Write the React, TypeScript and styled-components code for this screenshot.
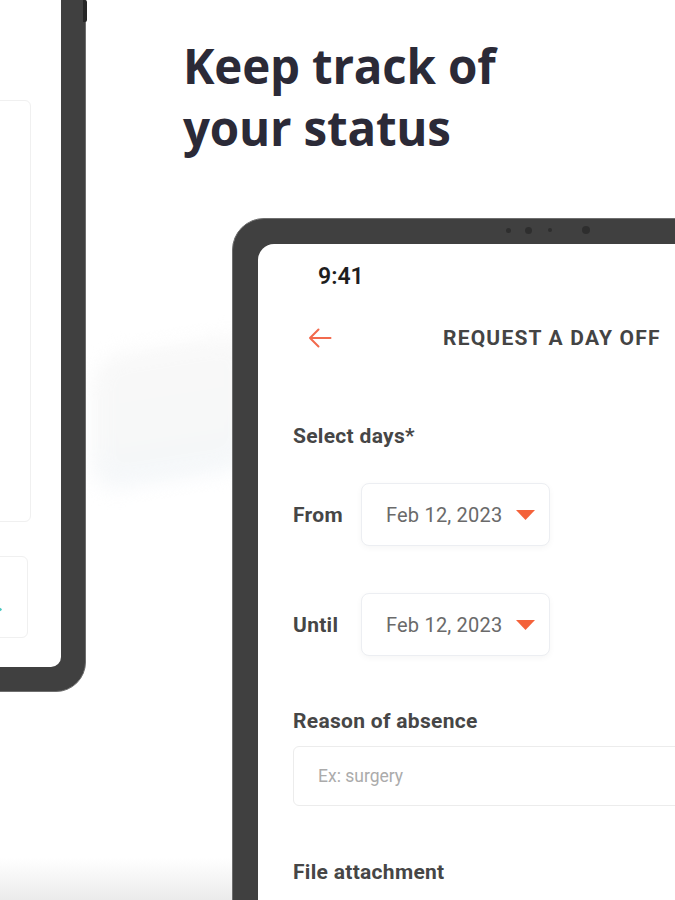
import React from "react";
import styled, { createGlobalStyle } from "styled-components";

const GlobalStyle = createGlobalStyle`
  html, body { margin: 0; padding: 0; background: #ffffff; }
  body {
    width: 675px;
    height: 900px;
    overflow: hidden;
    font-family: Roboto, "Noto Sans", Arial, sans-serif;
  }
  * { box-sizing: border-box; }
`;

const Page = styled.main`
  position: relative;
  width: 675px;
  height: 900px;
  overflow: hidden;
  display: grid;
  grid-template-columns: 86px 1fr;
  align-items: start;
  background: linear-gradient(to bottom, #ffffff 0, #ffffff 858px, #ebebeb 900px);
`;

const Haze = styled.div`
  position: absolute;
  left: 92px;
  top: 345px;
  width: 160px;
  height: 135px;
  border-radius: 30px;
  background: linear-gradient(to bottom, #f4f4f4 0%, #f3f4f4 55%, #edf2f6 100%);
  filter: blur(10px);
  transform: skewY(-9deg);
  opacity: 0.6;
  z-index: 0;
`;

const Device = styled.div<{ $radius: number; $pad: number }>`
  position: relative;
  z-index: 1;
  display: flex;
  padding: ${(p) => p.$pad}px;
  background: #404040;
  border: 1px solid #6e6e6e;
  border-radius: ${(p) => p.$radius}px;
`;

const LeftDevice = styled(Device)`
  width: 400px;
  height: 992px;
  margin-top: -300px;
  margin-left: -314px;
`;

const SideButton = styled.span`
  position: absolute;
  right: -2px;
  top: 299px;
  width: 4px;
  height: 22px;
  border-radius: 0 2px 2px 0;
  background: #262626;
`;

const LeftScreen = styled.div`
  flex: 1;
  background: #ffffff;
  border-radius: 10px;
  display: flex;
  flex-direction: column;
  align-items: flex-end;
  justify-content: flex-end;
  gap: 34px;
  padding: 0 30px 29px 0;
`;

const GhostCard = styled.div<{ $h: number; $shift?: number }>`
  width: 300px;
  height: ${(p) => p.$h}px;
  margin-right: ${(p) => p.$shift ?? 0}px;
  border: 1px solid #f0f0f0;
  border-radius: 6px;
  background: #ffffff;
  display: flex;
  align-items: flex-end;
  justify-content: flex-end;
  padding: 0 24px 23px 0;
`;

const RightColumn = styled.section`
  display: flex;
  flex-direction: column;
  min-width: 0;
`;

const Heading = styled.h1`
  margin: 35px 0 0 97px;
  font-family: "Open Sans", "Noto Sans", sans-serif;
  font-weight: 700;
  font-size: 47.5px;
  line-height: 62px;
  letter-spacing: -0.2px;
  color: #2b2a37;
`;

const RightDevice = styled(Device)`
  width: 560px;
  height: 760px;
  margin: 59px 0 0 146px;
`;

const Sensors = styled.div`
  position: absolute;
  top: 7px;
  left: 273px;
  height: 8px;
  display: flex;
  align-items: center;
`;

const Dot = styled.span<{ $size: number; $gap: number }>`
  width: ${(p) => p.$size}px;
  height: ${(p) => p.$size}px;
  margin-right: ${(p) => p.$gap}px;
  border-radius: 50%;
  background: #2e2e2e;
`;

const Screen = styled.div`
  flex: 1;
  background: #ffffff;
  border-radius: 16px;
  display: flex;
  flex-direction: column;
  padding-left: 35px;
  min-width: 0;
`;

const StatusTime = styled.div`
  margin: 20px 0 0 25px;
  font-weight: 600;
  font-size: 23px;
  line-height: 26px;
  color: #1e1e1e;
`;

const Header = styled.div`
  display: flex;
  align-items: center;
  height: 30px;
  margin-top: 33px;
`;

const BackButton = styled.span`
  display: inline-flex;
  margin-left: 15px;
`;

const Title = styled.div`
  margin-left: 111px;
  font-weight: 700;
  font-size: 21px;
  line-height: 24px;
  letter-spacing: 1.2px;
  color: #444444;
  white-space: nowrap;
`;

const Label = styled.div<{ $top: number }>`
  margin-top: ${(p) => p.$top}px;
  font-weight: 700;
  font-size: 21px;
  line-height: 24px;
  letter-spacing: 0.3px;
  color: #464646;
  white-space: nowrap;
`;

const DateRow = styled.div<{ $top: number }>`
  display: grid;
  grid-template-columns: 68px 189px;
  align-items: center;
  margin-top: ${(p) => p.$top}px;
`;

const RowLabel = styled.span`
  font-weight: 700;
  font-size: 21px;
  line-height: 24px;
  letter-spacing: 0.3px;
  color: #464646;
`;

const DateBox = styled.div`
  height: 63px;
  display: flex;
  align-items: center;
  padding: 0 14px 0 24px;
  border: 1px solid #eceef2;
  border-radius: 8px;
  background: #ffffff;
  box-shadow: 0 2px 6px rgba(0, 0, 0, 0.04);
  font-size: 20px;
  letter-spacing: 0.2px;
  color: #6a6a6a;
  white-space: nowrap;
`;

const Caret = styled.svg`
  margin-left: auto;
  flex: none;
`;

const TextInput = styled.input`
  margin-top: 13px;
  height: 60px;
  width: 100%;
  padding: 0 0 0 24px;
  border: 1px solid #ececec;
  border-radius: 6px;
  background: #ffffff;
  font-family: Roboto, "Noto Sans", sans-serif;
  font-size: 17.5px;
  color: #444;
  outline: none;
  &::placeholder { color: #ababab; }
`;

export default function App() {
  return (
    <>
      <GlobalStyle />
      <Page>
        <Haze />
        <LeftDevice $radius={30} $pad={24}>
          <SideButton />
          <LeftScreen>
            <GhostCard $h={422} />
            <GhostCard $h={82} $shift={3}>
              <svg width="8" height="9" viewBox="0 0 8 9" fill="none">
                <path d="M1 1l5 3.5L1 8" stroke="#46c8c0" strokeWidth="1.6" strokeLinecap="round" strokeLinejoin="round" />
              </svg>
            </GhostCard>
          </LeftScreen>
        </LeftDevice>

        <RightColumn>
          <Heading>
            Keep track of
            <br />
            your status
          </Heading>

          <RightDevice $radius={32} $pad={25}>
            <Sensors>
              <Dot $size={5} $gap={14} />
              <Dot $size={7} $gap={16} />
              <Dot $size={4} $gap={30} />
              <Dot $size={8} $gap={0} />
            </Sensors>
            <Screen>
              <StatusTime>9:41</StatusTime>
              <Header>
                <BackButton>
                  <svg width="24" height="20" viewBox="0 0 24 20" fill="none">
                    <path d="M22.5 10H2M10.5 1.5L2 10l8.5 8.5" stroke="#f26a4d" strokeWidth="2" strokeLinecap="round" strokeLinejoin="round" />
                  </svg>
                </BackButton>
                <Title>REQUEST A DAY OFF</Title>
              </Header>

              <Label $top={71}>Select days*</Label>

              <DateRow $top={35}>
                <RowLabel>From</RowLabel>
                <DateBox>
                  Feb 12, 2023
                  <Caret width="19" height="10" viewBox="0 0 19 10">
                    <path d="M0 0h19L9.5 10z" fill="#f4623a" />
                  </Caret>
                </DateBox>
              </DateRow>

              <DateRow $top={47}>
                <RowLabel>Until</RowLabel>
                <DateBox>
                  Feb 12, 2023
                  <Caret width="19" height="10" viewBox="0 0 19 10">
                    <path d="M0 0h19L9.5 10z" fill="#f4623a" />
                  </Caret>
                </DateBox>
              </DateRow>

              <Label $top={53}>Reason of absence</Label>
              <TextInput placeholder="Ex: surgery" readOnly />

              <Label $top={54}>File attachment</Label>
            </Screen>
          </RightDevice>
        </RightColumn>
      </Page>
    </>
  );
}
